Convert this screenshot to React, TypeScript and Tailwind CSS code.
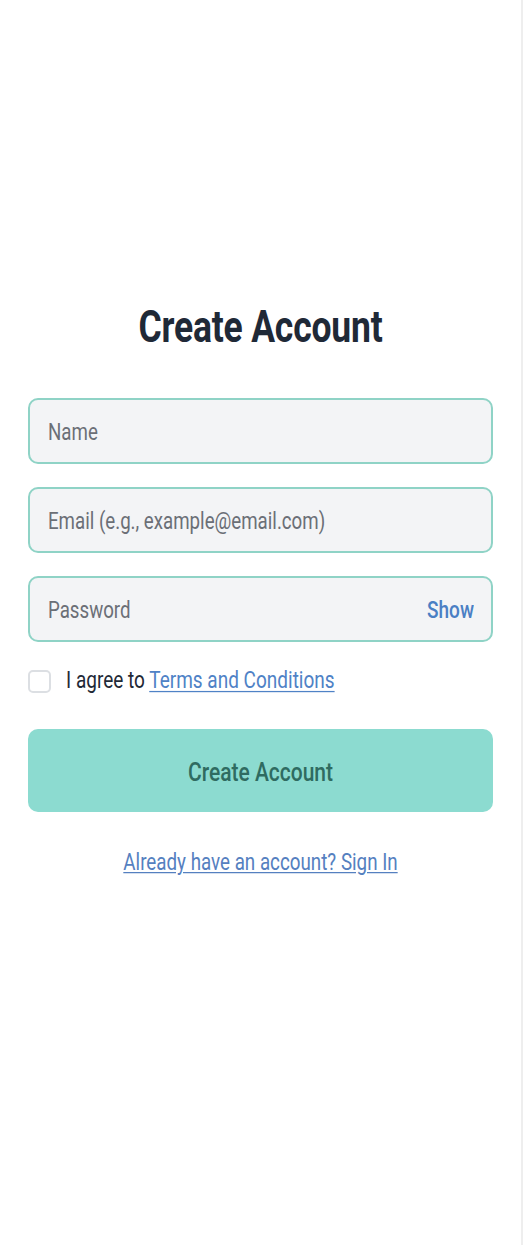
import React from "react";

export default function App() {
  return (
    <div className="min-h-[1245px] w-full bg-white font-['Roboto',_'Liberation_Sans',_sans-serif] border-r-2 border-[#eeeeee]">
      <div className="px-[28px] pt-[304px] flex flex-col">
        <h1 className="text-center text-[35.5px] leading-[46px] font-bold text-[#1f2937] tracking-[-0.2px]">
          <span className="inline-block scale-y-[1.25]">Create Account</span>
        </h1>
        <div className="mt-[48px] flex flex-col gap-[23px]">
          <div className="h-[66px] rounded-[10px] border-2 border-[#8fd3c6] bg-[#f3f4f6] flex items-center pt-[4px] px-[18px]">
            <span className="inline-block scale-y-[1.25] text-[18.7px] text-[#6b6f76]">Name</span>
          </div>
          <div className="h-[66px] rounded-[10px] border-2 border-[#8fd3c6] bg-[#f3f4f6] flex items-center pt-[4px] px-[18px]">
            <span className="inline-block scale-y-[1.25] text-[18.7px] text-[#6b6f76]">Email (e.g., example@email.com)</span>
          </div>
          <div className="h-[66px] rounded-[10px] border-2 border-[#8fd3c6] bg-[#f3f4f6] flex items-center justify-between pt-[4px] pl-[18px] pr-[17px]">
            <span className="inline-block scale-y-[1.25] text-[18.7px] text-[#6b6f76]">Password</span>
            <span className="inline-block scale-y-[1.25] text-[19px] font-medium text-[#4a7fc4]">Show</span>
          </div>
        </div>
        <div className="mt-[28px] flex items-center h-[22px]">
          <div className="w-[23px] h-[23px] rounded-[5px] border-2 border-[#dcdfe3] bg-white" />
          <span className="ml-[15px] inline-block scale-y-[1.25] text-[19px] text-[#1f2937]">
            I agree to{" "}
            <span className="text-[#4f82c6] underline underline-offset-2">Terms and Conditions</span>
          </span>
        </div>
        <div className="mt-[37px] h-[83px] rounded-[10px] bg-[#8cdbd0] flex items-center justify-center pt-[4px]">
          <span className="inline-block scale-y-[1.25] text-[21px] font-medium text-[#2f6b61]">Create Account</span>
        </div>
        <div className="mt-[38px] text-center leading-[24px]">
          <span className="inline-block scale-y-[1.25] text-[18.8px] text-[#5580c0] underline underline-offset-2">
            Already have an account? Sign In
          </span>
        </div>
      </div>
    </div>
  );
}
